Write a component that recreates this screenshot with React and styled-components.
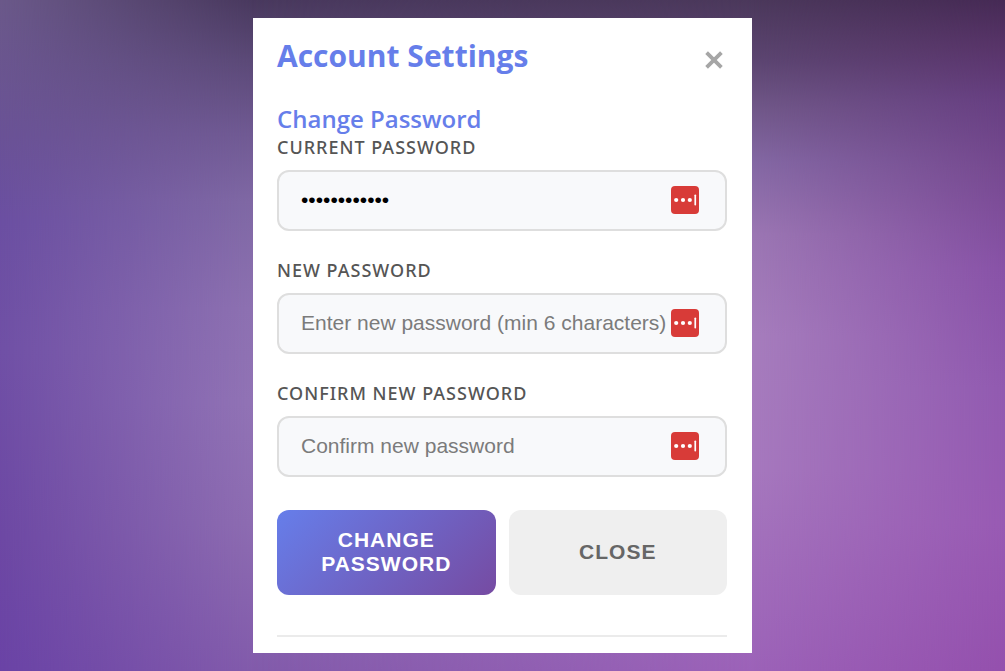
import React from "react";
import styled, { createGlobalStyle } from "styled-components";

const GlobalStyle = createGlobalStyle`
  * { box-sizing: border-box; }
  body { margin: 0; }
`;

const Backdrop = styled.div`
  position: relative;
  isolation: isolate;
  min-height: 100vh;
  display: flex;
  justify-content: center;
  align-items: center;
  padding: 18px 16px;
  font-family: "Segoe UI", "Open Sans", sans-serif;
  background: linear-gradient(180deg, #6b598a 0%, #6a5296 20%, #6b4fa2 33%, #7050a6 52%, #6d48a4 80%, #6a43a6 100%);
`;

/* A vertical colour ramp that fades in from one horizontal stop to the next. */
const Wash = styled.div`
  position: absolute;
  inset: 0;
  z-index: -1;
  background: linear-gradient(180deg, ${(p) => p.$ramp});
  mask-image: linear-gradient(90deg, transparent ${(p) => p.$from}, #000 ${(p) => p.$to});
`;

const Card = styled.main`
  width: 100%;
  max-width: 499px;
  padding: 20px 25px 16px 24px;
  background: #fff;
`;

const Header = styled.header`
  display: flex;
  justify-content: space-between;
  align-items: center;
  height: 36px;
  margin-bottom: 28px;
`;

const Title = styled.h1`
  margin: 0;
  font-size: 30px;
  line-height: 34px;
  font-weight: 700;
  color: #667eea;
`;

const IconButton = styled.button`
  display: flex;
  padding: 8px 4px 0;
  border: 0;
  background: none;
  color: #a6a6a6;
  cursor: pointer;
`;

const SectionTitle = styled.h2`
  margin: 0;
  font-size: 24px;
  line-height: 34px;
  font-weight: 600;
  color: #667eea;
`;

const Field = styled.div`
  margin-bottom: 28px;
`;

const Label = styled.label`
  display: block;
  margin-bottom: 12px;
  font-family: "Segoe UI", "Noto Sans", sans-serif;
  font-size: 18px;
  line-height: 22px;
  font-weight: 500;
  letter-spacing: 1px;
  text-transform: uppercase;
  color: #555;
`;

const InputBox = styled.div`
  position: relative;
`;

const Input = styled.input`
  display: block;
  width: 100%;
  height: 61px;
  padding: 0 54px 2px 22px;
  border: 2px solid #dedede;
  border-radius: 12px;
  background: #f8f9fb;
  font-family: Arial, "Liberation Sans", sans-serif;
  font-size: 21px;
  color: #000;
  outline: none;
  &::placeholder { color: #7b7b7b; opacity: 1; }
`;

const ManagerBadge = styled.svg`
  position: absolute;
  top: 16px;
  right: 28px;
`;

const Actions = styled.div`
  display: flex;
  gap: 13px;
  margin-top: 33px;
`;

const Button = styled.button`
  flex: 1 1 0;
  min-height: 85px;
  padding: 0 24px 2px;
  border: 0;
  border-radius: 12px;
  background: ${(p) => (p.$primary ? "linear-gradient(135deg, #667eea 0%, #764ba2 100%)" : "#efefef")};
  color: ${(p) => (p.$primary ? "#fff" : "#666")};
  font-family: Arial, "Liberation Sans", sans-serif;
  font-size: 21px;
  line-height: 24px;
  font-weight: 700;
  letter-spacing: 1px;
  text-transform: uppercase;
  cursor: pointer;
`;

const Divider = styled.hr`
  margin: 40px 0 0;
  border: 0;
  border-top: 2px solid #ebebeb;
`;

function PasswordField({ id, label, ...rest }) {
  return (
    <Field>
      <Label htmlFor={id}>{label}</Label>
      <InputBox>
        <Input id={id} type="password" {...rest} />
        <ManagerBadge width="28" height="28" viewBox="0 0 28 28" aria-hidden="true">
          <rect width="28" height="28" rx="4" fill="#d83b38" />
          <circle cx="5.2" cy="14" r="2.1" fill="#fff" />
          <circle cx="12" cy="14" r="2.1" fill="#fff" />
          <circle cx="18.8" cy="14" r="2.1" fill="#fff" />
          <rect x="23.4" y="8.5" width="1.7" height="11" rx="0.8" fill="#fff" />
        </ManagerBadge>
      </InputBox>
    </Field>
  );
}

export default function App() {
  return (
    <>
      <GlobalStyle />
      <Backdrop>
        <Wash $from="0%" $to="25%" $ramp="#49395e 0%, #5b4977 9%, #705a93 20%, #7f68a4 30%, #8d71b1 46%, #9173b5 60%, #8d6cb1 78%, #825bab 100%" />
        <Wash $from="25%" $to="75%" $ramp="#4b385b 0%, #5c4571 9%, #705788 16%, #8367a3 24%, #9b76b3 35%, #a67dbd 50%, #a678be 70%, #9c62b8 100%" />
        <Wash $from="75%" $to="100%" $ramp="#462a55 0%, #583469 7%, #673f82 15%, #764990 25%, #8852a7 40%, #915ab0 58%, #985ab3 78%, #9450ad 100%" />
        <Card>
          <Header>
            <Title>Account Settings</Title>
            <IconButton type="button" aria-label="Close settings">
              <svg width="18" height="18" viewBox="0 0 18 18" aria-hidden="true">
                <path d="M1.6 1.6 16.4 16.4M16.4 1.6 1.6 16.4" stroke="currentColor" strokeWidth="3.8" fill="none" />
              </svg>
            </IconButton>
          </Header>
          <form onSubmit={(e) => e.preventDefault()}>
            <SectionTitle>Change Password</SectionTitle>
            <PasswordField id="current" label="Current Password" defaultValue="correcthorse" />
            <PasswordField id="new" label="New Password" placeholder="Enter new password (min 6 characters)" />
            <PasswordField id="confirm" label="Confirm New Password" placeholder="Confirm new password" />
            <Actions>
              <Button type="submit" $primary>Change Password</Button>
              <Button type="button">Close</Button>
            </Actions>
          </form>
          <Divider />
        </Card>
      </Backdrop>
    </>
  );
}
